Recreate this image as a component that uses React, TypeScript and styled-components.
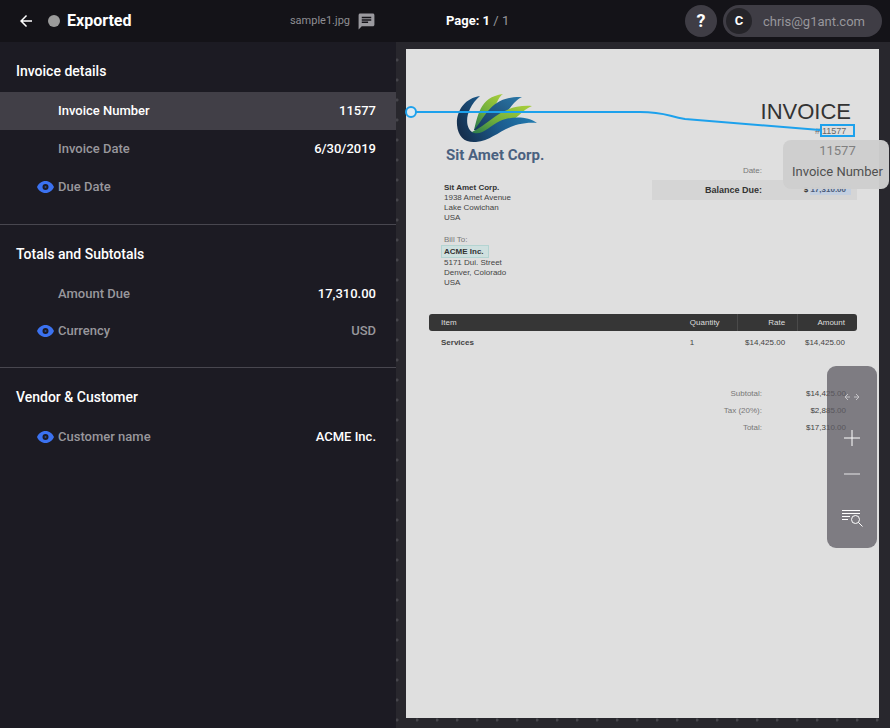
import React from "react";
import styled, { createGlobalStyle } from "styled-components";
import { MdArrowBack, MdChat } from "react-icons/md";

const GlobalStyle = createGlobalStyle`
  *, *::before, *::after { box-sizing: border-box; }
  body { margin: 0; background: #1c1b23; font-family: Roboto, "Liberation Sans", sans-serif; }
  button { font: inherit; color: inherit; border: 0; background: none; padding: 0; cursor: pointer; }
`;

const Layout = styled.div`
  display: grid;
  grid-template-columns: minmax(280px, 396fr) minmax(0, 494fr);
  min-height: 100vh;
`;

const Sidebar = styled.aside`
  display: flex;
  flex-direction: column;
  background: #1c1b23;
  color: #fff;
`;

const TopBar = styled.header`
  display: flex;
  align-items: center;
  height: 42px;
  background: #141318;
  color: #fff;
`;

const StatusBar = styled(TopBar)`
  padding: 0 20px 0 17px;
`;

const IconButton = styled.button`
  display: flex;
  align-items: center;
  justify-content: center;
`;

const StatusDot = styled.span`
  width: 12px;
  height: 12px;
  margin: 0 7px 0 13px;
  border-radius: 50%;
  background: #9b9b9b;
`;

const Status = styled.h1`
  margin: 0;
  font-size: 16px;
  font-weight: 700;
  line-height: 20px;
`;

const FileName = styled.span`
  margin-left: auto;
  margin-right: 7px;
  color: #8f8e93;
  font-size: 11px;
  line-height: 16px;
`;

const Section = styled.section`
  padding-bottom: 18px;
  & + & { border-top: 1px solid #48474f; }
`;

const SectionTitle = styled.h2`
  margin: 0;
  padding: 19px 16px 11px;
  font-size: 14px;
  font-weight: 500;
  line-height: 20px;
`;

const FieldRow = styled.button<{ $active?: boolean; $dense?: boolean }>`
  display: flex;
  align-items: center;
  width: 100%;
  height: ${(p) => (p.$dense ? 37 : 38)}px;
  padding: 0 20px 0 37px;
  font-size: 13px;
  font-weight: 500;
  line-height: 18px;
  text-align: left;
  color: ${(p) => (p.$active ? "#fff" : "#98979c")};
  background: ${(p) => (p.$active ? "#413f47" : "transparent")};
`;

const EyeSlot = styled.span`
  display: flex;
  width: 21px;
`;

const FieldValue = styled.span<{ $muted?: boolean }>`
  margin-left: auto;
  color: ${(p) => (p.$muted ? "#98979c" : "#fff")};
`;

const Viewer = styled.main`
  display: flex;
  flex-direction: column;
  min-width: 0;
`;

const ViewerBar = styled(TopBar)`
  gap: 6px;
  padding: 0 8px 0 50px;
`;

const PageCount = styled.div`
  margin-right: auto;
  font-size: 13px;
  font-weight: 700;
  line-height: 18px;
  span { font-weight: 400; color: #98979c; }
`;

const HelpButton = styled.button`
  width: 32px;
  height: 32px;
  border-radius: 50%;
  background: #3f3d45;
  color: #fff;
  font-size: 18px;
  font-weight: 700;
  line-height: 32px;
`;

const Account = styled.button`
  display: flex;
  align-items: center;
  height: 32px;
  padding: 0 17px 0 3px;
  border-radius: 16px;
  background: #3f3d45;
  color: #98979c;
  font-size: 13px;
`;

const Avatar = styled.span`
  width: 26px;
  height: 26px;
  margin-right: 11px;
  border-radius: 50%;
  background: #252429;
  color: #fff;
  font-weight: 700;
  line-height: 26px;
  text-align: center;
`;

const Canvas = styled.div`
  position: relative;
  display: flex;
  flex: 1;
  padding: 7px 11px 10px 10px;
  background: #28272d radial-gradient(circle at 1px 18px, #46454b 1px, transparent 2px) 0 0 / 20px 20px;
`;

const Paper = styled.article`
  flex: 1;
  min-width: 0;
  padding: 42px 22px 40px 23px;
  background: #dfdfdf;
  color: #444;
  font-family: "Liberation Sans", Arial, sans-serif;
  font-size: 8px;
  line-height: 10px;
`;

const PaperHead = styled.div`
  display: flex;
  justify-content: space-between;
`;

const Company = styled.div`
  padding-left: 15px;
`;

const Brand = styled.div`
  display: flex;
  flex-direction: column;
  margin-left: 2px;
  svg { margin-left: 10px; }
`;

const BrandName = styled.div`
  color: #4a6180;
  font-family: Roboto, sans-serif;
  font-size: 15px;
  font-weight: 700;
  line-height: 20px;
`;

const Address = styled.address`
  margin-top: 18px;
  font-style: normal;
  b { display: block; color: #333; }
`;

const BillTo = styled(Address)`
  margin-top: 12px;
`;

const Caption = styled.div`
  color: #777;
`;

const CustomerMark = styled.mark`
  display: inline-block;
  margin: 0 0 0 -3px;
  padding: 1px 4px 0 2px;
  border: 1px solid #b4d4d2;
  background: #cfe0df;
`;

const Summary = styled.div`
  display: flex;
  flex-direction: column;
  width: 205px;
`;

const InvoiceTitle = styled.div`
  margin-top: 8px;
  padding-right: 6px;
  color: #333;
  font-size: 22px;
  line-height: 25px;
  text-align: right;
`;

const InvoiceNo = styled.div`
  display: flex;
  justify-content: flex-end;
  align-items: center;
  padding-right: 2px;
  color: #666;
  font-size: 9px;
`;

const NumberBox = styled.span`
  position: relative;
  width: 35px;
  height: 13px;
  border: 2px solid #1da1ec;
  line-height: 10px;
`;

const Tooltip = styled.div`
  position: absolute;
  z-index: 2;
  top: 14px;
  left: -39px;
  padding: 0 6px 6px 9px;
  border-radius: 8px;
  background: rgba(206, 206, 206, 0.97);
  color: #505050;
  font-family: Roboto, sans-serif;
  font-size: 13px;
  line-height: 22px;
  text-align: center;
  white-space: nowrap;
  div:first-child { color: #808080; line-height: 21px; }
`;

const AmountRow = styled.div<{ $strong?: boolean }>`
  display: grid;
  grid-template-columns: 110px 84px;
  align-items: center;
  height: ${(p) => (p.$strong ? 20 : 17)}px;
  background: ${(p) => (p.$strong ? "#d5d5d5" : "transparent")};
  color: ${(p) => (p.$strong ? "#333" : "#444")};
  font-weight: ${(p) => (p.$strong ? 700 : 400)};
  text-align: right;
`;

const DateRow = styled(AmountRow)`
  margin-top: 25px;
  margin-bottom: 1px;
  color: #777;
`;

const BalanceLabel = styled.span`
  font-size: 9px;
`;

const AmountMark = styled.mark`
  margin-right: -5px;
  padding: 1px 5px 1px 0;
  background: #c3cfe0;
  color: #4a5a78;
`;

const Items = styled.table`
  width: 100%;
  margin-top: 26px;
  border-spacing: 0;
  table-layout: fixed;
  th, td { padding: 0 12px 0 0; text-align: right; }
  th { height: 17px; background: #363636; color: #ddd; font-weight: 400; }
  td { height: 24px; }
  th + th + th { border-left: 1px solid #4a4a4a; }
  th:first-child, td:first-child { padding-left: 12px; text-align: left; }
  th:first-child { border-radius: 3px 0 0 3px; }
  th:last-child { border-radius: 0 3px 3px 0; }
  th:nth-child(2), td:nth-child(2) { padding-left: 4px; text-align: left; }
  td:first-child { font-weight: 700; }
`;

const Totals = styled.div`
  width: 205px;
  margin: 30px 0 0 auto;
  > div > span:first-child { color: #777; }
`;

const Connector = styled.svg`
  position: absolute;
  z-index: 1;
  top: 60px;
  left: 9px;
  pointer-events: none;
`;

const Tools = styled.div`
  position: absolute;
  z-index: 2;
  top: 324px;
  right: 13px;
  display: flex;
  flex-direction: column;
  width: 50px;
  padding-top: 12px;
  border-radius: 9px;
  background: rgba(94, 92, 100, 0.76);
`;

const ToolButton = styled(IconButton)<{ $h: number }>`
  height: ${(p) => p.$h}px;
`;

const Eye = () => (
  <svg width="17" height="12" viewBox="0 0 17 12" aria-hidden="true">
    <path fill="#3b72f0" fillRule="evenodd" d="M8.500 0C4.700 0 1.500 2.400 0 6c1.500 3.600 4.700 6 8.500 6S15.500 9.600 17 6C15.500 2.400 12.300 0 8.500 0Zm0 3a3 3 0 1 1 0 6 3 3 0 0 1 0-6Z" />
    <circle cx="8.500" cy="6" r="1" fill="#2a4a94" />
  </svg>
);

const Logo = () => (
  <svg width="82" height="54" viewBox="0 0 82 54" aria-hidden="true">
    <defs>
      <linearGradient id="swoosh" x1="0" y1="0.600" x2="1" y2="0.300">
        <stop offset="0" stopColor="#15304f" />
        <stop offset="0.450" stopColor="#1b5a8c" />
        <stop offset="1" stopColor="#2380b5" />
      </linearGradient>
      <linearGradient id="leaf" x1="0" y1="1" x2="0.800" y2="0">
        <stop offset="0" stopColor="#22754e" />
        <stop offset="0.500" stopColor="#6fae3c" />
        <stop offset="1" stopColor="#a3cb3b" />
      </linearGradient>
      <linearGradient id="blade" x1="0" y1="1" x2="1" y2="0">
        <stop offset="0" stopColor="#17365c" />
        <stop offset="1" stopColor="#2a78a8" />
      </linearGradient>
    </defs>
    <path fill="url(#leaf)" d="M18 39C22 26 23 6 47 3c-8 5-8 23-26 36Z" />
    <path fill="url(#blade)" d="M18 39C30 26 34 5 66 6 54 11 52 29 22 40Z" />
    <path fill="url(#leaf)" d="M16 41C36 31 46 13 76 15 64 20 60 31 46 34 36 37 30 46 18 45Z" />
    <path fill="url(#swoosh)" d="M24 5C9 7 0 20 1 34c1 12 8 18 19 17 21-2 29-21 61-19-9-7-26-7-37-2-10 5-17 14-26 12C8 38 8 19 24 5Z" />
  </svg>
);

type Field = { label: string; value?: string; eye?: boolean; active?: boolean; muted?: boolean };

const sections: { title: string; dense: boolean; fields: Field[] }[] = [
  {
    title: "Invoice details",
    dense: false,
    fields: [
      { label: "Invoice Number", value: "11577", active: true },
      { label: "Invoice Date", value: "6/30/2019" },
      { label: "Due Date", eye: true },
    ],
  },
  {
    title: "Totals and Subtotals",
    dense: true,
    fields: [
      { label: "Amount Due", value: "17,310.00" },
      { label: "Currency", value: "USD", eye: true, muted: true },
    ],
  },
  {
    title: "Vendor & Customer",
    dense: true,
    fields: [{ label: "Customer name", value: "ACME Inc.", eye: true }],
  },
];

const totals = [
  ["Subtotal:", "$14,425.00"],
  ["Tax (20%):", "$2,885.00"],
  ["Total:", "$17,310.00"],
];

export default function App() {
  return (
    <Layout>
      <GlobalStyle />
      <Sidebar>
        <StatusBar>
          <IconButton aria-label="Back"><MdArrowBack size={18} /></IconButton>
          <StatusDot />
          <Status>Exported</Status>
          <FileName>sample1.jpg</FileName>
          <IconButton aria-label="Comments"><MdChat size={19} color="#9b9a9f" /></IconButton>
        </StatusBar>
        {sections.map((s) => (
          <Section key={s.title}>
            <SectionTitle>{s.title}</SectionTitle>
            {s.fields.map((f) => (
              <FieldRow key={f.label} $active={f.active} $dense={s.dense}>
                <EyeSlot>{f.eye && <Eye />}</EyeSlot>
                {f.label}
                {f.value && <FieldValue $muted={f.muted}>{f.value}</FieldValue>}
              </FieldRow>
            ))}
          </Section>
        ))}
      </Sidebar>
      <Viewer>
        <ViewerBar>
          <PageCount>Page: 1 <span>/ 1</span></PageCount>
          <HelpButton aria-label="Help">?</HelpButton>
          <Account><Avatar>C</Avatar>chris@g1ant.com</Account>
        </ViewerBar>
        <Canvas>
          <Paper>
            <PaperHead>
              <Company>
                <Brand>
                  <Logo />
                  <BrandName>Sit Amet Corp.</BrandName>
                </Brand>
                <Address>
                  <b>Sit Amet Corp.</b>
                  1938 Amet Avenue<br />Lake Cowichan<br />USA
                </Address>
                <BillTo>
                  <Caption>Bill To:</Caption>
                  <CustomerMark><b>ACME Inc.</b></CustomerMark><br />
                  5171 Dui. Street<br />Denver, Colorado<br />USA
                </BillTo>
              </Company>
              <Summary>
                <InvoiceTitle>INVOICE</InvoiceTitle>
                <InvoiceNo>
                  #
                  <NumberBox>
                    11577
                    <Tooltip><div>11577</div><div>Invoice Number</div></Tooltip>
                  </NumberBox>
                </InvoiceNo>
                <DateRow><span>Date:</span></DateRow>
                <AmountRow $strong>
                  <BalanceLabel>Balance Due:</BalanceLabel>
                  <span>$ <AmountMark>17,310.00</AmountMark></span>
                </AmountRow>
              </Summary>
            </PaperHead>
            <Items>
              <colgroup>
                <col />
                <col width="12%" />
                <col width="14%" />
                <col width="14%" />
              </colgroup>
              <thead>
                <tr><th>Item</th><th>Quantity</th><th>Rate</th><th>Amount</th></tr>
              </thead>
              <tbody>
                <tr><td>Services</td><td>1</td><td>$14,425.00</td><td>$14,425.00</td></tr>
              </tbody>
            </Items>
            <Totals>
              {totals.map(([label, value]) => (
                <AmountRow key={label}><span>{label}</span><span>{value}</span></AmountRow>
              ))}
            </Totals>
          </Paper>
          <Connector width="416" height="32" viewBox="0 0 416 32" fill="none" stroke="#1da1ec" strokeWidth="2" aria-hidden="true">
            <path d="M11 10H235C260 10 262 14 280 17L415 28" />
            <circle cx="6" cy="10" r="5" fill="#dfeaf2" />
          </Connector>
          <Tools>
            <ToolButton $h={38} aria-label="Fit width">
              <svg width="16" height="8" viewBox="0 0 16 8" fill="none" stroke="#c4c3c7">
                <path d="M4 1 1 4l3 3M1 4h5M12 1l3 3-3 3M15 4h-5" />
              </svg>
            </ToolButton>
            <ToolButton $h={44} aria-label="Zoom in">
              <svg width="16" height="16" viewBox="0 0 16 16" stroke="#fff"><path d="M8 0v16M0 8h16" /></svg>
            </ToolButton>
            <ToolButton $h={28} aria-label="Zoom out">
              <svg width="16" height="2" viewBox="0 0 16 2" stroke="#e6e6e8"><path d="M0 1h16" /></svg>
            </ToolButton>
            <ToolButton $h={60} aria-label="Search text">
              <svg width="22" height="18" viewBox="0 0 22 18" fill="none" stroke="#fff">
                <path d="M1 1.500h18M1 4.500h18M1 7.500h8M1 10.500h6" />
                <circle cx="14.500" cy="10.500" r="4" />
                <path d="m17.500 13.500 4 4" />
              </svg>
            </ToolButton>
          </Tools>
        </Canvas>
      </Viewer>
    </Layout>
  );
}
